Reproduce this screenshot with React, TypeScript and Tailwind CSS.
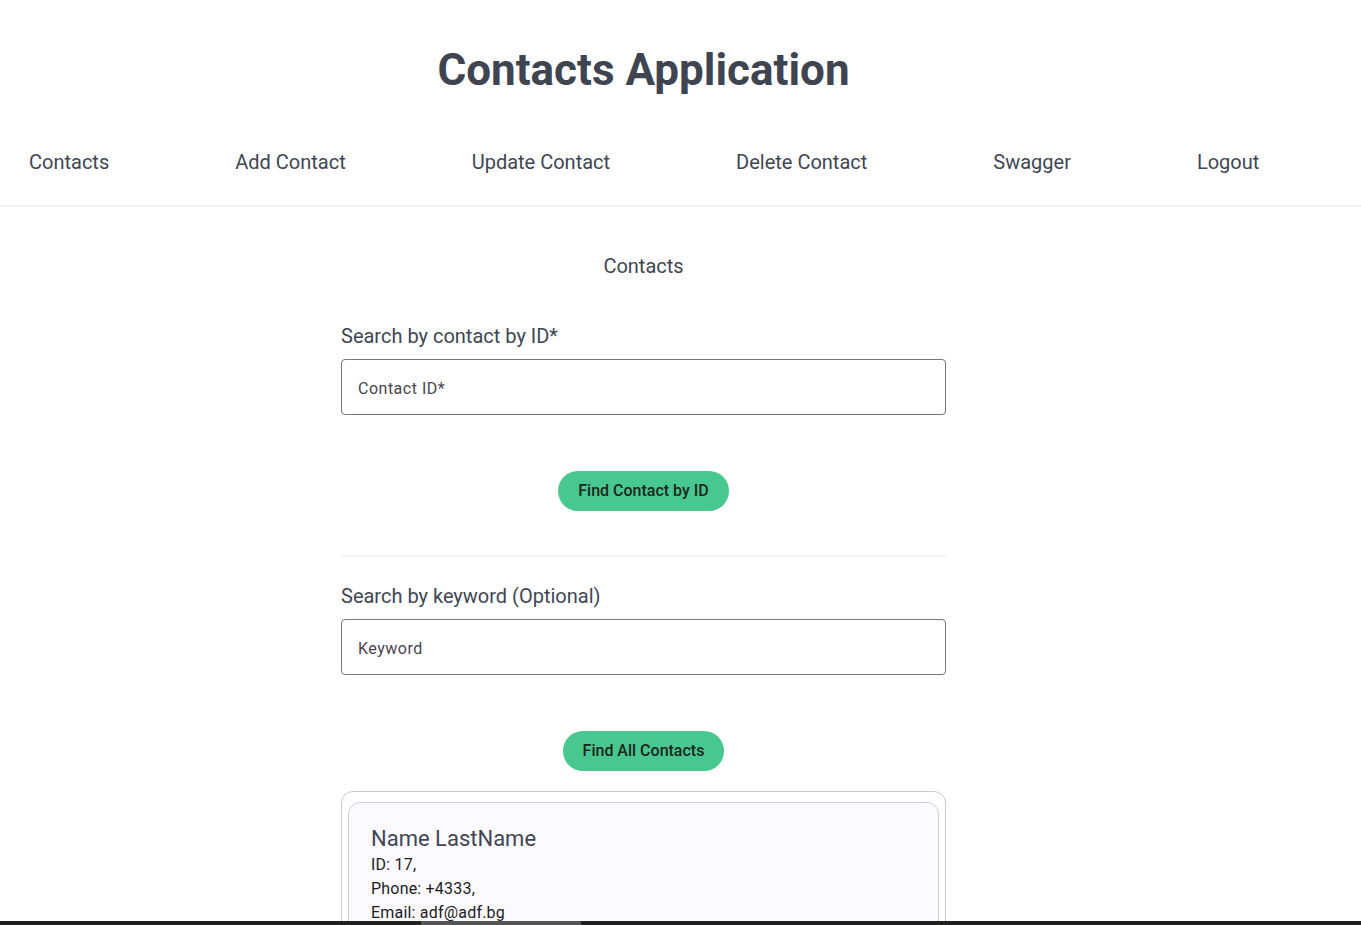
const navItems = ["Contacts", "Add Contact", "Update Contact", "Delete Contact", "Swagger", "Logout"];

export default function App() {
  return (
    <div className="min-h-screen bg-white text-[#404654] font-['Roboto',sans-serif]">
      <div className="w-[1287px]">
        {/* Header */}
        <header className="h-[140px] flex items-center justify-center">
          <h1 className="text-[44px] leading-[56px] font-bold text-[#3f4451]">Contacts Application</h1>
        </header>

        {/* Nav */}
        <nav className="pb-[21px] border-b-2 border-[#f2f2f2] w-[1361px]">
          <ul className="h-[44px] flex items-center gap-[126px] pl-[29px] text-xl">
            {navItems.map((item) => (
              <li key={item}>
                <a href="#" className="hover:text-[#48c78e]">{item}</a>
              </li>
            ))}
          </ul>
        </nav>

        {/* Contacts */}
        <main className="w-[605px] mx-auto">
          <h2 className="mt-[45px] text-xl leading-7 text-center">Contacts</h2>

          <label className="block mt-[42px] text-xl leading-7">Search by contact by ID*</label>
          <input
            className="mt-[9px] w-full h-[56px] px-4 pt-[2px] rounded border border-[#79747e] text-base tracking-[0.5px] outline-none placeholder:text-[#49454f]"
            placeholder="Contact ID*"
          />
          <div className="mt-[56px] flex justify-center">
            <button className="h-10 px-5 rounded-full bg-[#48c78e] text-base font-medium text-[#1c2620]">
              Find Contact by ID
            </button>
          </div>

          <hr className="mt-[44px] border-0 h-[2px] bg-[#f5f5f5]" />

          <label className="block mt-[25px] text-xl leading-7">Search by keyword (Optional)</label>
          <input
            className="mt-[9px] w-full h-[56px] px-4 pt-[2px] rounded border border-[#79747e] text-base tracking-[0.5px] outline-none placeholder:text-[#49454f]"
            placeholder="Keyword"
          />
          <div className="mt-[56px] flex justify-center">
            <button className="h-10 px-5 rounded-full bg-[#48c78e] text-base font-medium text-[#1c2620]">
              Find All Contacts
            </button>
          </div>

          <div className="mt-5 rounded-xl border border-[#cac8d0] bg-white px-[6px] pt-[10px] pb-3">
            <div className="rounded-xl border border-[#d0ccd6] bg-[#fcfaff] px-[22px] pt-[22px] pb-5">
              <div className="text-[22px] leading-7 text-[#404654]">Name LastName</div>
              <div className="text-base leading-6 tracking-[0.2px] text-[#1c1b1f]">ID: 17,</div>
              <div className="text-base leading-6 tracking-[0.2px] text-[#1c1b1f]">Phone: +4333,</div>
              <div className="text-base leading-6 tracking-[0.2px] text-[#1c1b1f]">Email: adf@adf.bg</div>
            </div>
          </div>
          <div className="h-10" />
        </main>
      </div>

      {/* scrollbar strip */}
      <div className="fixed bottom-0 left-0 w-full h-[4px] bg-[#202020]">
        <div className="ml-[421px] w-[160px] h-full bg-[#555555]" />
      </div>
    </div>
  );
}
